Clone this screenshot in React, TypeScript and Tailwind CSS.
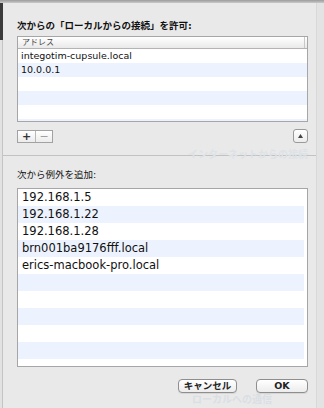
import React from 'react';

const ui = { fontFamily: '"DejaVu Sans", "Noto Sans CJK JP", sans-serif' };

const topRows = ['integotim-cupsule.local', '10.0.0.1', '', '', '', ''];
const bottomRows = [
  '192.168.1.5',
  '192.168.1.22',
  '192.168.1.28',
  'brn001ba9176fff.local',
  'erics-macbook-pro.local',
  '', '', '', '', '', '',
];

const PushButton = ({ label, width }: { label: string; width: string }) => (
  <button
    className={`${width} h-[14px] rounded-[4px] border border-[#8e8e8e] bg-gradient-to-b from-white to-[#ececec] text-[9.5px] font-semibold leading-[12px] text-[#222] shadow-[0_1px_0_rgba(0,0,0,0.08)]`}
  >
    {label}
  </button>
);

const App = () => {
  return (
    <div className="relative flex h-[408px] w-[324px] flex-col overflow-hidden bg-[#e9e9e9]" style={ui}>
      {/* top edge of the sheet */}
      <div className="h-[3px] bg-gradient-to-b from-[#9c9c9c] to-[#c9c9c9]" />

      <div className="flex flex-1">
        {/* window behind, peeking at left */}
        <div className="flex w-[3px] flex-col">
          <div className="h-[37px] bg-[#3b3b3b]" />
          <div className="flex-1 border-r border-[#c4c4c4] bg-[#e2e2e2]" />
        </div>

        <div className="flex flex-1 flex-col border-r border-[#d8d8d8]">
          {/* allow local connections from */}
          <div className="flex flex-col pl-[14px] pr-[8px] pt-[17px]">
            <div className="h-[12px] text-[9.5px] font-bold leading-[12px] text-[#111]">
              次からの「ローカルからの接続」を許可:
            </div>

            <div className="mt-[4px] flex h-[86px] flex-col overflow-hidden border border-[#a6a6a6] bg-white">
              <div className="flex h-[12px] shrink-0 items-center border-b border-[#b4b4b4] bg-gradient-to-b from-white to-[#e9e9e9]">
                <span className="flex-1 pl-[4px] text-[8px] leading-[10px] text-[#4a4a4a]">アドレス</span>
                <span className="h-full w-[3px] border-l border-[#c8c8c8]" />
              </div>
              {topRows.map((row, i) => (
                <div
                  key={i}
                  className={`flex h-[14px] shrink-0 items-center pl-[3px] text-[9.5px] leading-[14px] text-[#111] ${i % 2 === 1 ? 'bg-[#edf3fe]' : 'bg-white'}`}
                >
                  {row}
                </div>
              ))}
            </div>

            <div className="mt-[7px] flex h-[14px] items-center">
              <div className="flex h-[13px] border border-[#a2a2a2] bg-gradient-to-b from-white to-[#ececec]">
                <span className="flex w-[18px] items-center justify-center border-r border-[#b8b8b8] text-[11px] font-bold leading-none text-[#333]">
                  +
                </span>
                <span className="flex w-[16px] items-center justify-center text-[11px] leading-none text-[#a0a0a0]">
                  −
                </span>
              </div>
              <div className="flex-1" />
              <div className="flex h-[14px] w-[15px] items-center justify-center rounded-[3px] border border-[#9a9a9a] bg-gradient-to-b from-white to-[#ececec]">
                <svg width="5" height="4" viewBox="0 0 5 4">
                  <path d="M2.5 0L5 4H0z" fill="#444" />
                </svg>
              </div>
            </div>
          </div>

          {/* add exceptions from */}
          <div className="mt-[12px] flex flex-1 flex-col border-t border-[#c2c2c2] pl-[14px] pr-[8px] pt-[13px]">
            <div className="h-[12px] text-[9.5px] leading-[12px] text-[#111]">次から例外を追加:</div>

            <div className="mt-[7px] flex h-[179px] flex-col overflow-hidden border border-[#a6a6a6] bg-white pr-[3px]">
              {bottomRows.map((row, i) => (
                <div
                  key={i}
                  className={`flex h-[17px] shrink-0 items-center pl-[4px] text-[11.5px] leading-[17px] text-[#111] ${i % 2 === 1 ? 'bg-[#edf3fe]' : 'bg-white'}`}
                >
                  {row}
                </div>
              ))}
            </div>

            <div className="mt-[12px] flex justify-end gap-[19px]">
              <PushButton label="キャンセル" width="w-[59px]" />
              <PushButton label="OK" width="w-[52px]" />
            </div>
          </div>
        </div>

        <div className="w-[7px] bg-[#e3e3e3]" />
      </div>

      {/* faint window content showing through the sheet */}
      <span className="pointer-events-none absolute left-[188px] top-[147px] text-[10px] font-bold text-[#dde2e7]">
        インターネットからの接続
      </span>
      <span className="pointer-events-none absolute left-[192px] top-[392px] text-[10px] font-bold text-[#dadfe4]">
        ローカルへの通信
      </span>
    </div>
  );
};

export default App;
